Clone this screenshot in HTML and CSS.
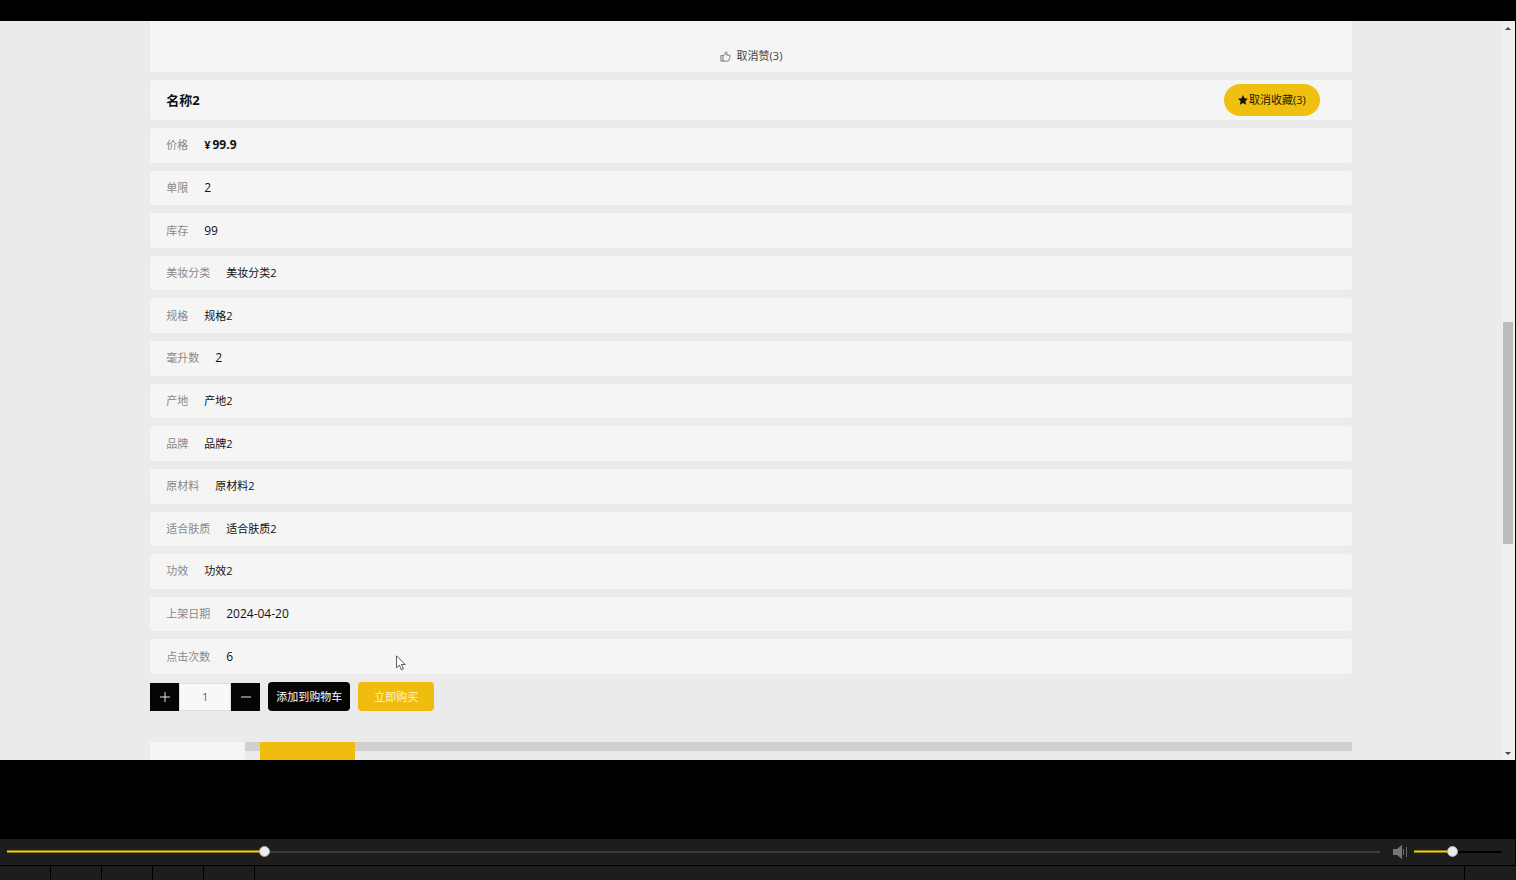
FILE: index.html
```html
<!DOCTYPE html>
<html lang="zh-CN">
<head>
  <meta charset="UTF-8" />
  <meta name="viewport" content="width=device-width, initial-scale=1" />
  <title>名称2</title>
  <link rel="stylesheet" href="styles.css">
</head>
<body>
  <div class="screen">
    <main class="page">
      <div class="content">
        <div class="praise">
          <button type="button" class="praise-btn">
            <svg class="thumb" viewBox="0 0 12 12" aria-hidden="true">
              <path d="M1 5h2.2v6H1zM3.2 5.2 5.3 3.8 6 1.2c.9-.5 1.7.2 1.6 1.2L7.2 4.5H10c.8 0 1.2.5 1 1.2l-1.1 4.2c-.2.7-.6 1.1-1.3 1.1H3.2" />
            </svg>
            取消赞(3)
          </button>
        </div>

        <div class="title-row">
          <h1>名称2</h1>
          <button type="button" class="collect-btn">
            <svg class="star" viewBox="0 0 10 10" aria-hidden="true">
              <path d="M5 0l1.5 3.3 3.5.4-2.6 2.4.7 3.6L5 7.9 1.9 9.7l.7-3.6L0 3.7l3.5-.4z" />
            </svg>
            取消收藏(3)
          </button>
        </div>

        <dl class="details">
          <div class="row"><dt>价格</dt><dd class="price"><span class="yen">¥</span>99.9</dd></div>
          <div class="row"><dt>单限</dt><dd class="num">2</dd></div>
          <div class="row"><dt>库存</dt><dd class="num">99</dd></div>
          <div class="row"><dt>美妆分类</dt><dd>美妆分类2</dd></div>
          <div class="row"><dt>规格</dt><dd>规格2</dd></div>
          <div class="row"><dt>毫升数</dt><dd class="num">2</dd></div>
          <div class="row"><dt>产地</dt><dd>产地2</dd></div>
          <div class="row"><dt>品牌</dt><dd>品牌2</dd></div>
          <div class="row"><dt>原材料</dt><dd>原材料2</dd></div>
          <div class="row"><dt>适合肤质</dt><dd>适合肤质2</dd></div>
          <div class="row"><dt>功效</dt><dd>功效2</dd></div>
          <div class="row"><dt>上架日期</dt><dd class="num">2024-04-20</dd></div>
          <div class="row"><dt>点击次数</dt><dd class="num">6</dd></div>
        </dl>

        <form class="buy" onsubmit="event.preventDefault();">
          <div class="stepper">
            <button type="button" aria-label="增加">
              <svg viewBox="0 0 10 10" aria-hidden="true"><path d="M0 5h10M5 0v10" /></svg>
            </button>
            <input type="text" aria-label="数量" value="1" />
            <button type="button" aria-label="减少">
              <svg viewBox="0 0 10 10" aria-hidden="true"><path d="M0 5h10" /></svg>
            </button>
          </div>
          <button type="button" class="cart-btn">添加到购物车</button>
          <button type="submit" class="buy-btn">立即购买</button>
        </form>

        <div class="tabs">
          <div class="tab"></div>
          <div class="tab active"></div>
        </div>
      </div>
    </main>

    <div class="scrollbar">
      <span class="arrow up"></span>
      <span class="handle"></span>
      <span class="arrow down"></span>
    </div>

    <svg class="cursor" viewBox="0 0 10 16" aria-hidden="true">
      <path d="M.5.8v12l2.9-2.6 2 4.6 2-.9-2-4.4h3.8z" />
    </svg>
  </div>

  <footer class="controls">
    <div class="sliders">
      <input type="range" class="seek" aria-label="进度" min="0" max="100" step="0.1" value="18.5" style="--fill: 18.5%" />
      <svg class="speaker" viewBox="0 0 14 14" aria-hidden="true">
        <path d="M0 4h4l5-4v14l-5-4H0z" />
        <path class="wave" d="M10.5 4v6M13.5 2v10" />
      </svg>
      <input type="range" class="volume" aria-label="音量" min="0" max="100" value="43" style="--fill: 43%" />
    </div>
    <div class="player-buttons">
      <button type="button" aria-label="播放"></button>
      <button type="button" aria-label="停止"></button>
      <button type="button" aria-label="上一个"></button>
      <button type="button" aria-label="下一个"></button>
      <button type="button" aria-label="打开"></button>
      <span class="blank"></span>
      <button type="button" aria-label="全屏"></button>
    </div>
  </footer>
</body>
</html>
```

FILE: styles.css
```css
* {
  box-sizing: border-box;
}
body {
  margin: 0;
  height: 100vh;
  padding-top: 21px;
  display: flex;
  flex-direction: column;
  justify-content: space-between;
  overflow: hidden;
  background: #000;
  color: #111;
  font-family: "Open Sans", "Noto Sans CJK SC", sans-serif;
  font-size: 11px;
  line-height: 16px;
}
button,
input {
  margin: 0;
  padding: 0;
  border: none;
  font: inherit;
}
svg {
  display: block;
}

/* product page */
.screen {
  position: relative;
  display: flex;
  margin-right: 1px;
  background: #ebebeb;
}
.page {
  flex: 1;
}
.content {
  width: 80%;
  margin: 0 auto;
}
.praise {
  display: flex;
  justify-content: center;
  padding: 27px 0 8px;
  margin-bottom: 8px;
  background: #f5f5f5;
}
.praise-btn {
  display: flex;
  align-items: center;
  gap: 6px;
  background: none;
  color: #444;
}
.thumb {
  width: 11px;
  height: 11px;
  fill: none;
  stroke: #555;
  stroke-width: 0.8;
}
.title-row {
  display: flex;
  align-items: center;
  justify-content: space-between;
  height: 40px;
  padding: 0 32px 0 16px;
  margin-bottom: 8px;
  border-radius: 3px;
  background: #f5f5f5;
}
h1 {
  margin: 0;
  font-size: 13px;
  font-weight: 700;
}
.collect-btn {
  display: flex;
  align-items: center;
  gap: 1px;
  height: 32px;
  padding: 0 14px;
  border-radius: 16px;
  background: #f0c010;
  color: #221b00;
}
.star {
  width: 10px;
  height: 10px;
  fill: #111;
}
.details {
  display: grid;
  grid-auto-rows: 1fr;
  gap: 8px;
  min-height: 546px;
  margin: 0 0 8px;
}
.row {
  display: flex;
  align-items: center;
  gap: 16px;
  padding: 0 16px;
  border-radius: 3px;
  background: #f5f5f5;
}
dt {
  color: #888;
}
dd {
  margin: 0;
}
.num,
.price {
  font-size: 12px;
}
.price {
  font-weight: 700;
}
.yen {
  margin-right: 2px;
  font-size: 11px;
}
.buy {
  display: flex;
  align-items: center;
  gap: 8px;
  margin-bottom: 31px;
}
.stepper {
  display: flex;
  height: 28px;
}
.stepper button {
  display: grid;
  place-items: center;
  width: 29px;
  background: #050505;
}
.stepper svg {
  width: 10px;
  height: 10px;
  stroke: #e8e8d8;
}
.stepper input {
  width: 52px;
  border: 1px solid #ddd;
  background: #f8f8f8;
  color: #666;
  text-align: center;
}
.cart-btn,
.buy-btn {
  height: 29px;
  padding: 0 8px;
  border-radius: 4px;
  background: #050505;
  color: #fff;
}
.buy-btn {
  padding: 0 16px;
  background: #f0bc10;
  color: #fff4c4;
}
.tabs {
  display: flex;
  height: 18px;
  background: linear-gradient(#d0d0d0 9px, #ebebeb 9px);
}
.tab {
  width: 95px;
  margin-right: 15px;
  background: #f5f5f5;
}
.tab.active {
  margin-right: 0;
  background: #f0bc10;
}

.scrollbar {
  display: flex;
  flex-direction: column;
  align-items: center;
  width: 13px;
  padding: 6px 2px 5px 1px;
  background: #eee;
}
/* the handle rests just below the middle of the track */
.handle {
  width: 10px;
  flex: 0 0 222px;
  margin: 292px 0 auto;
  background: #bcbcbc;
}
.arrow {
  border: 3px solid transparent;
}
.arrow.up {
  border-top: none;
  border-bottom-color: #444;
}
.arrow.down {
  border-bottom: none;
  border-top-color: #444;
}
.cursor {
  position: absolute;
  left: 396px;
  top: 634px;
  width: 10px;
  height: 16px;
  fill: #fff;
  stroke: #333;
  stroke-width: 0.8;
}

/* player */
.controls {
  background: #000;
}
.sliders {
  display: flex;
  align-items: center;
  height: 26px;
  margin: 0 1px 1px 0;
  padding: 0 13px 1px 7px;
  background: #1d1d1d;
}
input[type="range"] {
  -webkit-appearance: none;
  appearance: none;
  height: 11px;
  background: none;
}
.seek {
  --rest: #3c3c3c;
  flex: 1;
}
.volume {
  --rest: #000;
  width: 88px;
}
input[type="range"]::-webkit-slider-runnable-track {
  height: 3px;
  background:
    linear-gradient(#8c7a10 1px, #f2d410 1px, #f2d410 2px, #8c7a10 2px) 0 0 / var(--fill) 100% no-repeat,
    linear-gradient(var(--rest), var(--rest)) 0 50% / 100% 2px no-repeat;
}
input[type="range"]::-webkit-slider-thumb {
  -webkit-appearance: none;
  width: 11px;
  height: 11px;
  margin-top: -4px;
  border: 1px solid #aaa;
  border-radius: 50%;
  background: #ececec;
}
.speaker {
  width: 14px;
  height: 14px;
  margin: 0 7px 0 13px;
  fill: #777;
}
.wave {
  fill: none;
  stroke: #666;
}
.player-buttons {
  display: flex;
  gap: 1px;
  height: 14px;
}
.player-buttons button {
  width: 50px;
  background: #1d1d1d;
}
.player-buttons button:last-child {
  width: 51px;
}
.blank {
  flex: 1;
  background: #1d1d1d;
}
```
